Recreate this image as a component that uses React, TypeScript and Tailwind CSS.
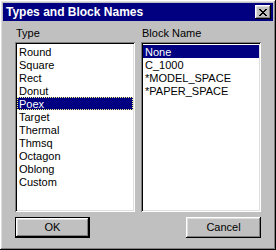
import React from "react";

const types = ["Round", "Square", "Rect", "Donut", "Poex", "Target", "Thermal", "Thmsq", "Octagon", "Oblong", "Custom"];
const blocks = ["None", "C_1000", "*MODEL_SPACE", "*PAPER_SPACE"];

const raised =
  "shadow-[inset_-1px_-1px_#000,inset_1px_1px_#fff,inset_-2px_-2px_#808080,inset_2px_2px_#dfdfdf]";
const sunken =
  "shadow-[inset_1px_1px_#808080,inset_-1px_-1px_#fff,inset_2px_2px_#000,inset_-2px_-2px_#dfdfdf]";

function ListBox({ items, selected, focus }: { items: string[]; selected: string; focus?: boolean }) {
  return (
    <div className={`h-[170px] w-[120px] bg-white p-[2px] ${sunken}`}>
      <div className="flex flex-col pt-px">
        {items.map((it) => {
          const sel = it === selected;
          return (
            <div
              key={it}
              className={`h-[13px] pl-[2px] leading-[13px] ${
                sel ? "bg-[#000080] text-white" : "text-black"
              } ${sel && focus ? "outline-1 outline-dotted outline-[#ffff80] -outline-offset-1" : ""}`}
            >
              <span className="relative top-px">{it}</span>
            </div>
          );
        })}
      </div>
    </div>
  );
}

export default function App() {
  return (
    <div
      className={`h-[250px] w-[276px] bg-[#c0c0c0] p-[3px] text-[11px] ${raised}`}
      style={{ fontFamily: '"Liberation Sans", Arial, sans-serif' }}
    >
      <div className="flex h-[18px] items-center justify-between bg-[#000080] pl-[3px] pr-[2px]">
        <span className="text-[12px] font-bold leading-none text-white">Types and Block Names</span>
        <div className={`flex h-[14px] w-[16px] items-center justify-center bg-[#c0c0c0] ${raised}`}>
          <svg width="8" height="7" viewBox="0 0 8 7" shapeRendering="crispEdges">
            <path
              d="M0 0h2v1H0zM6 0h2v1H6zM1 1h2v1H1zM5 1h2v1H5zM2 2h4v1H2zM3 3h2v1H3zM2 4h4v1H2zM1 5h2v1H1zM5 5h2v1H5zM0 6h2v1H0zM6 6h2v1H6z"
              fill="#000"
            />
          </svg>
        </div>
      </div>
      <div className="flex gap-[6px] pl-[12px] pt-[6px]">
        <div className="flex flex-col">
          <div className="h-[15px] pl-px leading-[13px]">Type</div>
          <ListBox items={types} selected="Poex" focus />
        </div>
        <div className="flex flex-col">
          <div className="h-[15px] pl-px leading-[13px]">Block Name</div>
          <ListBox items={blocks} selected="None" />
        </div>
      </div>
      <div className="mt-[5px] flex justify-between pl-[12px] pr-[12px]">
        <div className="h-[21px] w-[75px] border border-black">
          <div className={`flex h-full w-full items-center justify-center bg-[#c0c0c0] ${raised}`}>OK</div>
        </div>
        <div className={`flex h-[21px] w-[75px] items-center justify-center bg-[#c0c0c0] ${raised}`}>Cancel</div>
      </div>
    </div>
  );
}
